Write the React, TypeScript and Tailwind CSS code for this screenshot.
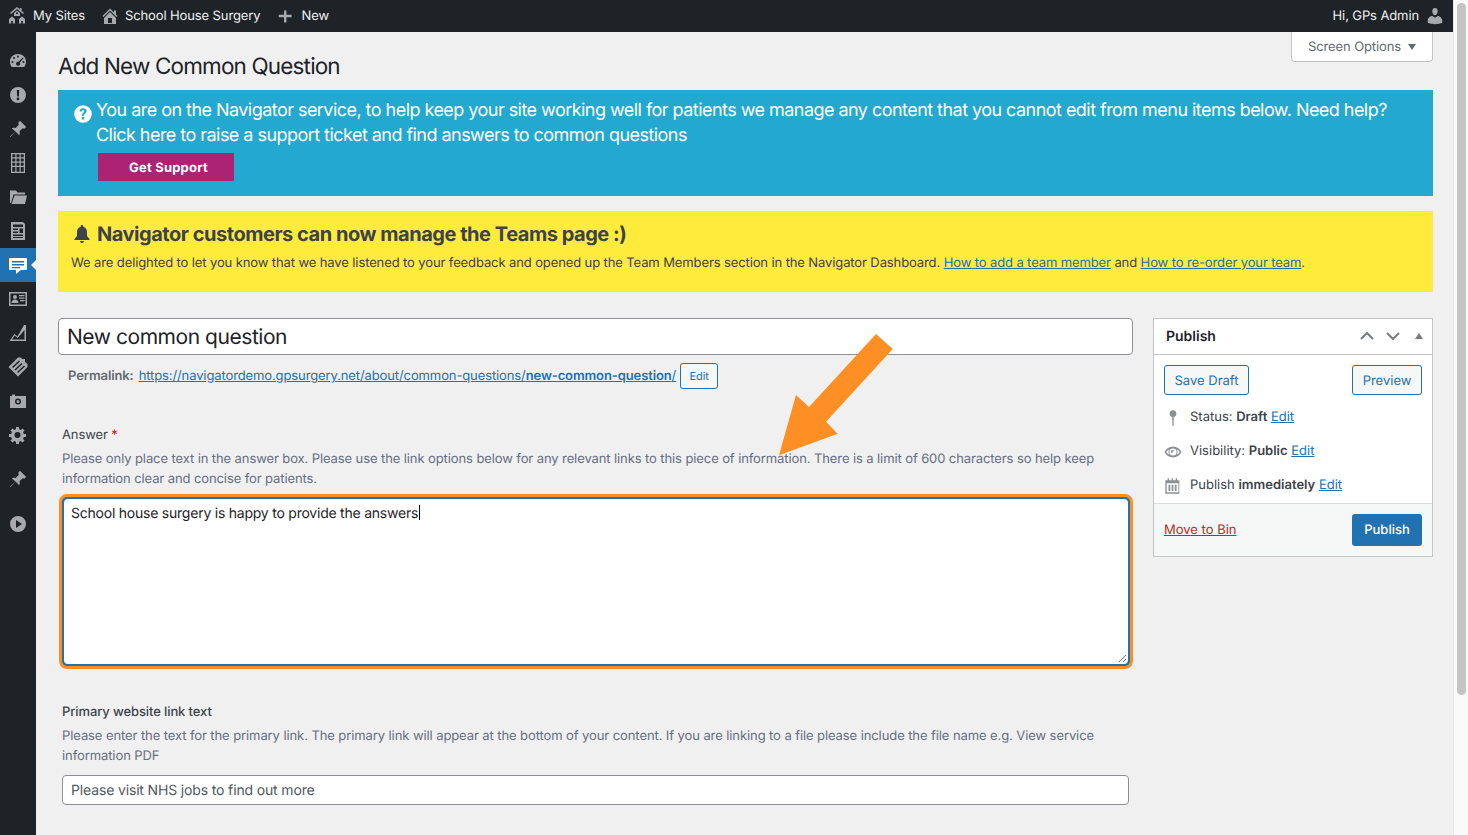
import React from "react";

const Ic = ({ d, s = 20, c = "#a7aaad" }: { d: string; s?: number; c?: string }) => (
  <svg width={s} height={s} viewBox="0 0 20 20" fill={c} className="shrink-0"><path fillRule="evenodd" d={d} /></svg>
);

const I = {
  sites: "M10 1l3 2.500V2h1.500v2.800L17 7l-1 1-6-5-6 5-1-1zM10 4.500l3 2.500v3H7V7zM9 6.500v1.500h2V6.500zM5 10.500l3 2.500v4.500H5.800v-2.500H4.200v2.500H2v-4.500zM15 10.500l3 2.500v4.500h-2.200v-2.500h-1.600v2.500H12v-4.500z",
  home: "M16 8.500l1.530 1.530-1.060 1.060L10 4.620l-6.470 6.470-1.060-1.060L10 2.500l4 4v-2h2v4zm-6-2.460l6 5.990V18H4v-5.970zM12 17v-5H8v5h4z",
  plus: "M10.500 3v5.500H17v3h-6.500V18h-3v-6.500H1v-3h6.500V3z",
  user: "M10 9.250c-2.270 0-2.730-3.440-2.730-3.440C7 4.020 7.820 2 9.970 2c2.160 0 2.980 2.020 2.710 3.810 0 0-.41 3.440-2.680 3.440zm0 2.570L12.720 10c2.390 0 4.520 2.330 4.520 4.530v2.490s-3.650 1.130-7.240 1.130c-3.650 0-7.240-1.130-7.240-1.130v-2.490c0-2.250 1.940-4.480 4.610-4.480z",
  gauge: "M3.760 16h12.480c1.090-1.460 1.760-3.250 1.760-5.200C18 6.040 14.420 3 10 3S2 6.040 2 10.800c0 1.950.67 3.740 1.760 5.200zM10 4.500a1 1 0 110 2 1 1 0 010-2zM6 6a1 1 0 110 2 1 1 0 010-2zm8.800.500l.9.600-3.900 4.700a2 2 0 11-1.200-1zM4.500 10a1 1 0 110 2 1 1 0 010-2zm11 0a1 1 0 110 2 1 1 0 010-2z",
  alert: "M10 2a8 8 0 110 16 8 8 0 010-16zM8.800 5l.3 6.500h1.800l.3-6.500zM10 12.500a1.400 1.400 0 100 2.800 1.400 1.400 0 000-2.800z",
  pin: "M10.440 3.020l1.820-1.010 5.730 5.730-1.010 1.820c-.6.100-1.510-.1-2.280-.4l-3.200 3.200c.4 1.300.5 2.700-.3 3.900L7.500 12.560 2.500 18l-.5-.5 5.440-5L3.740 9.300c1.200-.8 2.600-.7 3.900-.3l3.200-3.200c-.3-.77-.5-1.680-.4-2.780z",
  building: "M3 0h14v20H3zM4.300 1.300v3h3v-3zm4.200 0v3h3v-3zm4.200 0v3h3v-3zM4.300 5.500v3h3v-3zm4.200 0v3h3v-3zm4.200 0v3h3v-3zM4.300 9.700v3h3v-3zm4.200 0v3h3v-3zm4.200 0v3h3v-3zM4.300 14v4.800h3V14zm4.200 0v4.800h3V14zm4.200 0v4.800h3V14z",
  folder: "M2 3.500h6l1.500 2H17v2H5.500L3 16H2zM6.500 8.500H19l-2 8.500H3.500z",
  doc: "M3 1h12l2 2v16H3zM5 3.500V6h10V3.500zm0 4V9h5V7.500zm6.500 0V12H15V7.500zM5 10.500V12h5v-1.500zm0 3V15h10v-1.500zm0 2.500v1h10v-1z",
  chat: "M2 3h16a1 1 0 011 1v10a1 1 0 01-1 1h-5l-5 4v-4H2a1 1 0 01-1-1V4a1 1 0 011-1zm2 3v1.500h12V6zm0 3v1.500h12V9zm0 3v1.200h8V12z",
  card: "M1 3h18v14H1zM2.500 4.500v11h15v-11zM7 6a2 2 0 110 4 2 2 0 010-4zM3.500 14c0-2 1.500-3.500 3.500-3.500s3.500 1.500 3.500 3.500zM11 6h5.500v1.300H11zm0 2.500h5.500v1.300H11zm1 2.500h4.500v1.300H12z",
  chart: "M18 2v16H1.500l5-7 3 2.500L16 2zM16.500 7l-6.800 8-3-2.500-2.700 4h12.500z",
  tag: "M.5 10L10 .5h3L14 2h3v3l2.500 2v3L10 19.500zM4 10l7-6.500 1 1-7 6.500zM6.500 12.500l7-6.500 1 1-7 6.500zM9 15l7-6.500 1 1-7 6.500z",
  cam: "M2 5h2V3.500h3V5h11v12H2zm8 2.500a3 3 0 100 6 3 3 0 000-6zm0 1.500a1.500 1.500 0 110 3 1.500 1.500 0 010-3z",
  gear: "M18 12h-2.180c-.17.7-.44 1.350-.81 1.930l1.540 1.540-2.100 2.100-1.540-1.540c-.58.360-1.230.640-1.910.810V19H8v-2.180c-.680-.170-1.330-.450-1.910-.810l-1.540 1.540-2.120-2.120 1.540-1.540c-.360-.580-.640-1.230-.810-1.890H1V9h2.180c.170-.700.450-1.330.820-1.910L2.450 5.550l2.100-2.100L6.090 5c.580-.380 1.230-.640 1.910-.820V2h3v2.180c.700.180 1.350.440 1.930.820l1.540-1.540 2.100 2.100-1.540 1.540c.360.580.640 1.230.810 1.900H18zM9.500 13a3 3 0 100-6 3 3 0 000 6z",
  play: "M10 2a8 8 0 110 16 8 8 0 010-16zM8 6v8l6-4z",
  help: "M10 2a8 8 0 110 16 8 8 0 010-16zm.2 2.800c-1.900 0-3.200 1-3.300 2.900h2c.1-.8.500-1.200 1.200-1.200s1.100.4 1.100 1c0 1.200-2.200 1.400-2.200 3.500v.6h1.900v-.4c0-1.500 2.400-1.700 2.400-3.900 0-1.600-1.300-2.500-3.100-2.500zM9 12.800v2.200h2.100v-2.200z",
  bell: "M10 1a1.300 1.300 0 011.300 1.300v.5C13.800 3.400 15 5.500 15 8v4l2.500 3v1h-15v-1L5 12V8c0-2.500 1.200-4.600 3.700-5.200v-.5A1.300 1.300 0 0110 1zM8 17h4a2 2 0 01-4 0z",
  mapPin: "M10 1.500a3.700 3.700 0 01.9 7.300l-.3 10.200h-1.200l-.3-10.200A3.700 3.700 0 0110 1.500z",
  eye: "M10 4c4.200 0 7.600 2.500 9.500 6-1.900 3.500-5.300 6-9.500 6S2.400 13.500.5 10C2.400 6.500 5.800 4 10 4zM10 6a4 4 0 100 8 4 4 0 000-8zM2.500 10c.9 1.300 2 2.300 3.300 3.100A5.500 5.500 0 015.800 7 9 9 0 002.500 10zm15 0a9 9 0 00-3.300-3 5.500 5.500 0 010 6.100c1.300-.8 2.400-1.800 3.300-3.100zM8 8h3v1.500H9.500V11H8z",
  cal: "M1.500 3.500h2.500V1.500h1.500v2h3V1.500H10v2h3V1.500h1.500v2h2.500v15H1.500zM3 7v10h13V7zM5 8.500h2v7H5zm3.500 0h2v7h-2zm3.500 0h2v7h-2z",
};

const side: string[] = [I.gauge, I.alert, I.pin, I.building, I.folder, I.doc];

function SideIcon({ d, active, cls }: { d: string; active?: boolean; cls: string }) {
  return (
    <div className={`relative flex w-[36px] items-center justify-center ${cls} ${active ? "bg-[#2271b1]" : ""}`}>
      <Ic d={d} s={20} c={active ? "#ffffff" : "#a7aaad"} />
      {active && <div className="absolute right-0 top-[12px] border-y-[5px] border-r-[5px] border-y-transparent border-r-[#f0f0f1]" />}
    </div>
  );
}

function Link({ children }: { children: React.ReactNode }) {
  return <a className="text-[#2271b1] underline">{children}</a>;
}

export default function App() {
  return (
    <div className="flex h-[835px] w-[1468px] overflow-hidden bg-[#f0f0f1] font-['Inter','Liberation_Sans',sans-serif] text-[13px] tracking-[-0.11px] text-[#3c434a] [text-rendering:geometricPrecision]">
      <div className="flex w-[1453px] shrink-0 flex-col">
        <header className="flex h-[32px] shrink-0 items-center bg-[#1d2327] pl-[7px] pr-[8px] text-[#f0f0f1]">
          <Ic d={I.sites} />
          <span className="ml-[6px] pt-[2px]">My Sites</span>
          <span className="ml-[15px]"><Ic d={I.home} /></span>
          <span className="ml-[5px] pt-[2px]">School House Surgery</span>
          <span className="ml-[17px]"><Ic d={I.plus} s={16} /></span>
          <span className="ml-[8px] pt-[2px]">New</span>
          <span className="ml-auto pt-[2px]">Hi, GPs Admin</span>
          <span className="ml-[6px]"><Ic d={I.user} /></span>
        </header>

        <div className="flex min-h-0 flex-1">
          <nav className="flex w-[36px] shrink-0 flex-col bg-[#1d2327] pt-[12px]">
            {side.map((d) => <SideIcon key={d} d={d} cls="h-[34px]" />)}
            <SideIcon d={I.chat} active cls="h-[34px]" />
            <SideIcon d={I.card} cls="h-[34px]" />
            <SideIcon d={I.chart} cls="h-[34px]" />
            <SideIcon d={I.tag} cls="h-[34px]" />
            <SideIcon d={I.cam} cls="h-[34px]" />
            <SideIcon d={I.gear} cls="h-[34px]" />
            <SideIcon d={I.pin} cls="mt-[10px] h-[34px]" />
            <SideIcon d={I.play} cls="mt-[11px] h-[34px]" />
          </nav>

          <main className="relative w-[1417px] shrink-0 pl-[22px] pr-[20px]">
            <div className="absolute right-[20px] top-0 flex h-[30px] w-[142px] items-center justify-center gap-[7px] rounded-b-[4px] border border-t-0 border-[#c3c4c7] bg-white text-[#646970]">
              <span className="pt-[2px]">Screen Options</span>
              <span className="border-x-[4px] border-t-[6px] border-x-transparent border-t-[#646970]" />
            </div>

            <h1 className="pt-[20px] text-[22.5px] leading-[29px] tracking-[-0.85px] text-[#1d2327]">Add New Common Question</h1>

            <section className="mt-[9px] h-[106px] bg-[#23a9d0] pl-[14px] pt-[8px] text-white">
              <div className="flex items-start text-[18px] leading-[25px] tracking-[-0.54px]">
                <span className="mr-[2px] mt-[5px]"><Ic d={I.help} s={22} c="#ffffff" /></span>
                <p className="w-[1310px]">You are on the Navigator service, to help keep your site working well for patients we manage any content that you cannot edit from menu items below. Need help? Click here to raise a support ticket and find answers to common questions</p>
              </div>
              <div className="ml-[26px] mt-[5px] flex h-[28px] w-[136px] items-center justify-center bg-[#ad2273] pl-[5px] pt-[4px] font-bold tracking-[0.2px]">Get Support</div>
            </section>

            <section className="mt-[15px] h-[81px] bg-[#ffeb3b] pl-[13px] pt-[9px]">
              <div className="flex items-center pl-[1px] text-[20px] font-bold leading-[28px] tracking-[-0.47px]">
                <Ic d={I.bell} s={20} c="#3c434a" />
                <span className="ml-[5px]">Navigator customers can now manage the Teams page :)</span>
              </div>
              <p className="mt-[5px] leading-[20px]">
                We are delighted to let you know that we have listened to your feedback and opened up the Team Members section in the Navigator Dashboard. <Link>How to add a team member</Link> and <Link>How to re-order your team</Link>.
              </p>
            </section>

            <div className="mt-[26px] flex gap-[20px]">
              <div className="w-[1075px] shrink-0">
                <div className="flex h-[37px] items-center rounded-[4px] border border-[#8c8f94] bg-white pl-[8px] pt-[3px] text-[21px] tracking-[-0.45px] text-[#1d2327]">New common question</div>
                <div className="mt-[8px] flex h-[26px] items-center pl-[10px] text-[#646970]">
                  <b className="pt-[2px] font-semibold">Permalink:</b>
                  <span className="ml-[5px] pt-[2px]"><Link>https://navigatordemo.gpsurgery.net/about/common-questions/<b className="font-semibold">new-common-question</b>/</Link></span>
                  <span className="ml-[4px] flex h-[26px] w-[38px] items-center justify-center rounded-[3px] border border-[#2271b1] bg-[#f6f7f7] text-[11px] text-[#2271b1]">Edit</span>
                </div>

                <div className="mt-[36px] pl-[4px]">
                  <div className="leading-[20px]">Answer <span className="text-[#ff0000]">*</span></div>
                  <p className="mt-[4px] w-[1060px] leading-[20px] tracking-[-0.1px] text-[#646e82]">Please only place text in the answer box. Please use the link options below for any relevant links to this piece of information. There is a limit of 600 characters so help keep information clear and concise for patients.</p>
                </div>
                <div className="relative ml-[1px] mt-[5px] h-[175px] w-[1074px] rounded-[8px] border-[3px] border-[#fd8f24] bg-[#2271b1] p-[2px]">
                  <div className="h-full rounded-[4px] bg-white pl-[7px] pt-[4px] text-[14px] leading-[20px] tracking-[-0.23px] text-[#1d2327]">
                    School house surgery is happy to provide the answers<span className="ml-[0.5px] inline-block h-[15px] w-px translate-y-[2px] bg-black" />
                  </div>
                  <svg width="9" height="9" viewBox="0 0 9 9" className="absolute bottom-[3px] right-[3px]" stroke="#777" fill="none"><path d="M1 8l7-7M5 8l3-3" /></svg>
                </div>

                <div className="mt-[33px] pl-[4px]">
                  <div className="font-medium leading-[20px]">Primary website link text</div>
                  <p className="mt-[4px] w-[1060px] leading-[20px] tracking-[-0.09px] text-[#646e82]">Please enter the text for the primary link. The primary link will appear at the bottom of your content. If you are linking to a file please include the file name e.g. View service information PDF</p>
                  <div className="mt-[9px] flex h-[30px] w-[1067px] items-center rounded-[4px] border border-[#8c8f94] bg-white pl-[8px] text-[14px] tracking-[-0.15px] text-[#50575e]">Please visit NHS jobs to find out more</div>
                </div>
              </div>

              <aside className="h-[239px] w-[280px] shrink-0 border border-[#c3c4c7] bg-white tracking-normal">
                <div className="flex h-[36px] items-center border-b border-[#c3c4c7] pb-[1px] pl-[12px] pr-[9px]">
                  <span className="flex-1 text-[14px] font-semibold text-[#1d2327]">Publish</span>
                  <svg width="16" height="16" viewBox="0 0 16 16" fill="none" stroke="#787c82" strokeWidth="2" className="-translate-x-[2px]"><path d="M2 11l6-6 6 6" /></svg>
                  <svg width="16" height="16" viewBox="0 0 16 16" fill="none" stroke="#787c82" strokeWidth="2" className="ml-[10px] -translate-x-[2px]"><path d="M2 5l6 6 6-6" /></svg>
                  <span className="ml-[12px] border-x-[4px] border-b-[6px] border-x-transparent border-b-[#787c82]" />
                </div>
                <div className="flex justify-between px-[10px] pt-[10px]">
                  <span className="flex h-[30px] w-[85px] items-center justify-center rounded-[3px] border border-[#2271b1] bg-[#f6f7f7] pt-[3px] text-[#2271b1]">Save Draft</span>
                  <span className="flex h-[30px] w-[70px] items-center justify-center rounded-[3px] border border-[#2271b1] bg-[#f6f7f7] pt-[3px] text-[#2271b1]">Preview</span>
                </div>
                <div className="mt-[5px] flex h-[34px] items-center pl-[10px] pt-[1px]"><Ic d={I.mapPin} s={18} c="#8c8f94" /><span className="ml-[8px]">Status: <b className="font-semibold">Draft</b> <Link>Edit</Link></span></div>
                <div className="flex h-[34px] items-center pl-[10px] pt-[1px]"><Ic d={I.eye} s={18} c="#8c8f94" /><span className="ml-[8px]">Visibility: <b className="font-semibold">Public</b> <Link>Edit</Link></span></div>
                <div className="flex h-[34px] items-center pl-[10px] pt-[1px]"><Ic d={I.cal} s={18} c="#8c8f94" /><span className="ml-[8px]">Publish <b className="font-semibold">immediately</b> <Link>Edit</Link></span></div>
                <div className="mt-[1px] flex h-[53px] items-center justify-between border-t border-[#dcdcde] bg-[#f6f7f7] px-[10px]">
                  <a className="pt-[1px] text-[#b32d2e] underline">Move to Bin</a>
                  <span className="flex h-[32px] w-[70px] items-center justify-center rounded-[3px] bg-[#2271b1] pt-[2px] font-medium text-white">Publish</span>
                </div>
              </aside>
            </div>

            <svg width="120" height="126" viewBox="0 0 120 126" className="absolute left-[743px] top-[301px]">
              <polygon points="97,1 113.700,16 47,88.700 58.700,100.700 0,122.300 17,62 30,74" fill="#fd8f24" />
            </svg>
          </main>
        </div>
      </div>

      <div className="relative w-[15px] shrink-0 border-l border-[#e8e8e8] bg-[#fafafa]">
        <div className="absolute left-[3px] top-[3px] h-[692px] w-[9px] rounded-[5px] bg-[#c4c4c4]" />
      </div>
    </div>
  );
}
